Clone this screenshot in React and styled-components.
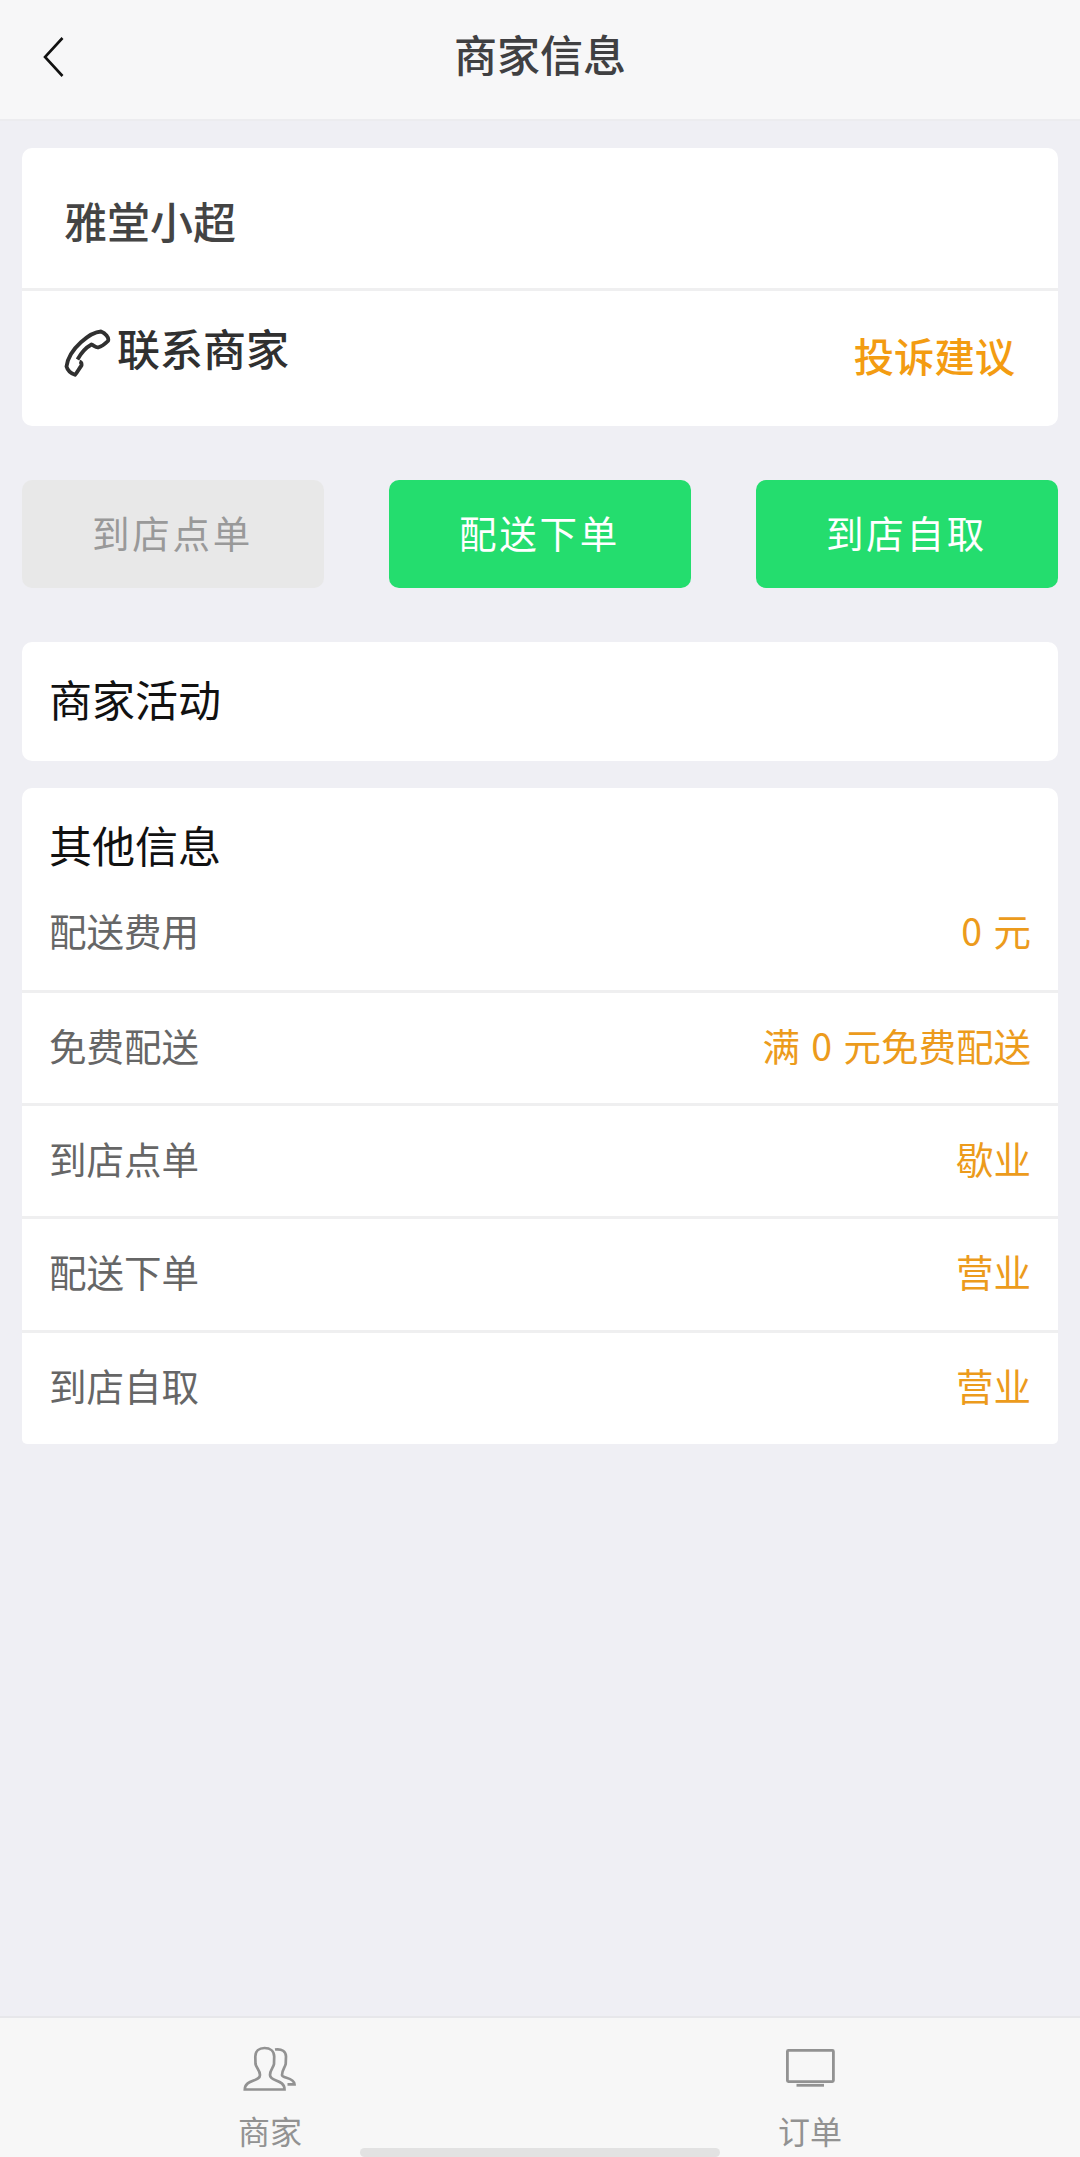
import React from "react";
import styled, { createGlobalStyle } from "styled-components";

const GlobalStyle = createGlobalStyle`
* {
  box-sizing: border-box;
}
body {
  margin: 0;
  background: #efeff4;
  font-family: "Noto Sans CJK SC", "Noto Sans", sans-serif;
}
`;

const Page = styled.div`
display: flex;
flex-direction: column;
height: 2157px;
width: 1080px;
overflow: hidden;
`;

const Header = styled.header`
display: grid;
grid-template-columns: 108px 1fr 108px;
height: 121px;
background: #f7f7f8;
border-bottom: 2px solid #ececef;
`;

const BackButton = styled.button`
display: flex;
padding: 36px 0 0 41px;
border: none;
background: none;
`;

const HeaderTitle = styled.h1`
margin: 0;
padding-top: 21px;
text-align: center;
font-size: 43px;
font-weight: 500;
line-height: 64px;
color: #404042;
`;

const Content = styled.main`
flex: 1;
padding: 27px 22px 0;
`;

const Card = styled.section`
background: white;
border-radius: ${(props) => props.$radius || "10px"};
margin-bottom: ${(props) => props.$gap || 0}px;
`;

const ShopName = styled.div`
height: 143px;
padding: 40px 42px 0;
border-bottom: 3px solid #efeff0;
font-size: 43px;
font-weight: 500;
line-height: 64px;
color: #444;
`;

const ContactRow = styled.div`
display: flex;
justify-content: space-between;
height: 135px;
padding: 24px 43px 0 42px;
`;

const Contact = styled.div`
display: flex;
gap: 6px;
font-size: 43px;
font-weight: 500;
line-height: 64px;
color: #303030;

svg {
  margin-top: 14px;
}
`;

const Complaint = styled.div`
padding-top: 8px;
font-size: 40.3px;
font-weight: 500;
line-height: 64px;
color: #f39c12;
`;

const ButtonRow = styled.div`
display: grid;
grid-template-columns: repeat(3, 302px);
justify-content: space-between;
margin-bottom: 54px;
`;

const OrderButton = styled.button`
height: 108px;
padding: 0 1px 6px 0;
border: none;
border-radius: 10px;
background: ${(props) => (props.$open ? "#24dd6e" : "#e8e8e8")};
color: ${(props) => (props.$open ? "white" : "#999")};
font-family: inherit;
font-size: 37.5px;
letter-spacing: 2.8px;
`;

const CardTitle = styled.h2`
margin: 0;
padding: 24px 27px 0;
height: ${(props) => props.$height}px;
font-size: 43px;
font-weight: 400;
line-height: 64px;
color: #111;
`;

const InfoRow = styled.div`
display: flex;
justify-content: space-between;
height: ${(props) => props.$height}px;
padding: 24px 27px 0;
border-bottom: ${(props) => (props.$last ? "none" : "3px solid #efeff0")};
font-size: 37.5px;
line-height: 56px;
color: #666;
`;

const InfoValue = styled.span`
color: #ec9b1c;
word-spacing: 3px;
`;

const TabBar = styled.nav`
position: relative;
display: grid;
grid-template-columns: 1fr 1fr;
height: 141px;
background: #f7f7f7;
border-top: 2px solid #e7e7ea;
`;

const Tab = styled.div`
display: flex;
flex-direction: column;
align-items: center;
padding-top: 24px;
font-size: 32px;
line-height: 46px;
color: #929292;

svg {
  flex-shrink: 0;
  margin-bottom: 15px;
}
`;

const HomeIndicator = styled.div`
position: absolute;
left: 360px;
bottom: 0;
width: 360px;
height: 9px;
border-radius: 5px;
background: #e2e2e2;
`;

const BackIcon = () => (
  <svg width="24" height="42" viewBox="0 0 24 42" fill="none" stroke="#111" strokeWidth="2.6">
    <path d="M21.5 2 L4 21 L21.5 40" />
  </svg>
);

const PhoneIcon = () => (
  <svg width="47" height="48" viewBox="0 0 47 48" fill="none" stroke="#303030" strokeWidth="3.8" strokeLinejoin="round">
    <path d="M13.5 30.5 C16.5 25 22 18.500 27.500 15.500 C30 16.500 31 18 34 18.500 C37.500 17.500 41 15 44 12 C45.500 8.500 41 4 37 2.500 C27 3 5 19 2.500 37.500 C3.500 41 7 44.500 11 45.800 C13.500 43.500 15 39.500 17.500 36.500 C17.800 34.500 17 33 15.500 32.500" />
  </svg>
);

const UsersIcon = () => (
  <svg width="54" height="50" viewBox="0 0 54 50" fill="none" stroke="#929292" strokeWidth="2.700">
    <path d="M21.500 6 C16 6 12.300 9 12.300 14.500 L12.500 22 C13 25.500 17 28 17 33 C17 40 2 37 1.800 47.500 L41.500 47.500 C41.500 37 27 40 27 33 C27 28 30.500 25.500 31 22 L31.200 14.500 C31.200 9 27 6 21.500 6 Z" />
    <path d="M32 7.500 C39 6.500 43 9.500 43 14.500 L42.700 22 C42 25.500 39 28 39 33 C39 36.500 51 35 51.500 42.300 L44.500 42.300" />
  </svg>
);

const OrderIcon = () => (
  <svg width="54" height="50" viewBox="0 0 54 50" fill="none" stroke="#929292" strokeWidth="2.800">
    <rect x="4.400" y="8.400" width="46" height="31.200" rx="1" />
    <path d="M13.500 43.300 H41" />
  </svg>
);

const orderTypes = [
  { name: "到店点单", open: false },
  { name: "配送下单", open: true },
  { name: "到店自取", open: true },
];

const infos = [
  { label: "配送费用", value: "0 元", height: 115 },
  { label: "免费配送", value: "满 0 元免费配送", height: 113 },
  { label: "到店点单", value: "歇业", height: 113 },
  { label: "配送下单", value: "营业", height: 114 },
  { label: "到店自取", value: "营业", height: 111 },
];

const App = () => {
  return (
    <Page>
      <GlobalStyle />
      <Header>
        <BackButton>
          <BackIcon />
        </BackButton>
        <HeaderTitle>商家信息</HeaderTitle>
      </Header>

      <Content>
        <Card $gap={54}>
          <ShopName>雅堂小超</ShopName>
          <ContactRow>
            <Contact>
              <PhoneIcon />
              联系商家
            </Contact>
            <Complaint>投诉建议</Complaint>
          </ContactRow>
        </Card>

        <ButtonRow>
          {orderTypes.map((t) => (
            <OrderButton key={t.name} $open={t.open}>
              {t.name}
            </OrderButton>
          ))}
        </ButtonRow>

        <Card $gap={27}>
          <CardTitle $height={119}>商家活动</CardTitle>
        </Card>

        <Card $radius="10px 10px 5px 5px">
          <CardTitle $height={90}>其他信息</CardTitle>
          {infos.map((info, i) => (
            <InfoRow key={info.label} $height={info.height} $last={i === infos.length - 1}>
              <span>{info.label}</span>
              <InfoValue>{info.value}</InfoValue>
            </InfoRow>
          ))}
        </Card>
      </Content>

      <TabBar>
        <Tab>
          <UsersIcon />
          商家
        </Tab>
        <Tab>
          <OrderIcon />
          订单
        </Tab>
        <HomeIndicator />
      </TabBar>
    </Page>
  );
};

export default App;
